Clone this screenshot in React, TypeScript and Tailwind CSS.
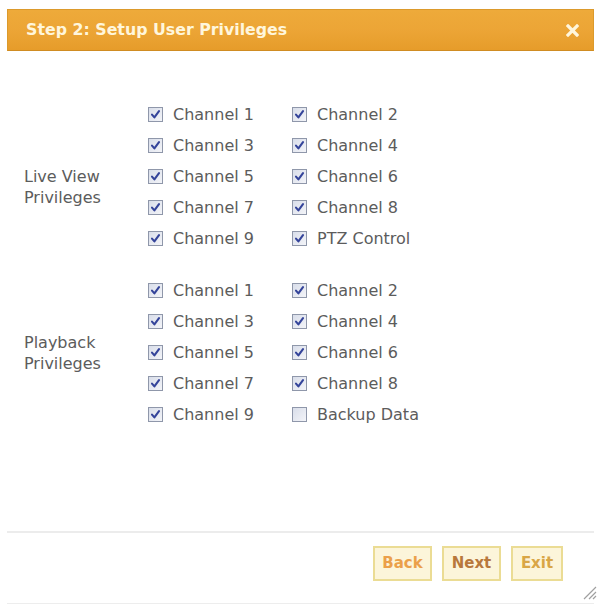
import React from "react";

const Check = ({ checked }: { checked: boolean }) => (
  <span className="relative inline-flex h-[15px] w-[15px] shrink-0 items-center justify-center border border-[#8f97aa] bg-gradient-to-br from-[#d9deea] to-[#f3f4f8]">
    {checked && (
      <svg width="11" height="11" viewBox="0 0 11 11">
        <path d="M2 5.6 L4.4 8.4 L9 2.2" fill="none" stroke="#34449a" strokeWidth="2.1" strokeLinecap="round" strokeLinejoin="round" />
      </svg>
    )}
  </span>
);

const Item = ({ label, checked = true }: { label: string; checked?: boolean }) => (
  <div className="flex h-[31px] items-center gap-[10px]">
    <Check checked={checked} />
    <span className="text-[16px] text-[#5c5c5c]">{label}</span>
  </div>
);

const Group = ({
  title,
  items,
  labelClass,
}: {
  title: [string, string];
  items: [string, boolean][];
  labelClass: string;
}) => (
  <div className="flex">
    <div className={`w-[124px] self-center text-[16px] leading-[21px] text-[#5c5c5c] ${labelClass}`}>
      <div>{title[0]}</div>
      <div>{title[1]}</div>
    </div>
    <div className="grid grid-cols-[144px_144px]">
      {items.map(([l, c], i) => (
        <Item key={i} label={l} checked={c} />
      ))}
    </div>
  </div>
);

export default function App() {
  const live: [string, boolean][] = [
    ["Channel 1", true],
    ["Channel 2", true],
    ["Channel 3", true],
    ["Channel 4", true],
    ["Channel 5", true],
    ["Channel 6", true],
    ["Channel 7", true],
    ["Channel 8", true],
    ["Channel 9", true],
    ["PTZ Control", true],
  ];
  const play: [string, boolean][] = [
    ["Channel 1", true],
    ["Channel 2", true],
    ["Channel 3", true],
    ["Channel 4", true],
    ["Channel 5", true],
    ["Channel 6", true],
    ["Channel 7", true],
    ["Channel 8", true],
    ["Channel 9", true],
    ["Backup Data", false],
  ];
  return (
    <div
      className="relative flex h-[604px] w-[601px] flex-col bg-white"
      style={{ fontFamily: '"DejaVu Sans", Verdana, sans-serif' }}
    >
      <div className="px-[7px] pt-[9px]">
        <div className="flex h-[42px] items-center justify-between border border-[#dc9a2c] border-b-[#d08c22] bg-gradient-to-b from-[#eeaa3a] via-[#eca536] to-[#e69c2a] pl-[18px] pr-[14px]">
          <span className="text-[15.8px] font-bold text-[#fff6dc]">Step 2: Setup User Privileges</span>
          <svg width="13" height="13" viewBox="0 0 13 13">
            <path d="M2 2 L11 11 M11 2 L2 11" stroke="#fff6dc" strokeWidth="3.2" strokeLinecap="square" />
          </svg>
        </div>
      </div>
      <div className="flex flex-1 flex-col gap-[21px] pl-[24px] pt-[48px]">
        <Group title={["Live View", "Privileges"]} items={live} labelClass="mt-[21px]" />
        <Group title={["Playback", "Privileges"]} items={play} labelClass="mt-0" />
      </div>
      <div className="mx-[7px] border-t-2 border-[#ececec]" />
      <div className="flex h-[70px] justify-end gap-[10px] pr-[38px] pt-[13px]">
        <button className="h-[35px] w-[59px] border-2 border-[#ebdc94] bg-[#fcf5da] text-[15px] font-bold text-[#eba04a]">Back</button>
        <button className="h-[35px] w-[59px] border-2 border-[#ebdc94] bg-[#fcf5da] text-[15px] font-bold text-[#b8783c]">Next</button>
        <button className="h-[35px] w-[52px] border-2 border-[#ebdc94] bg-[#fcf5da] text-[15px] font-bold text-[#d9a646]">Exit</button>
      </div>
      <div className="mx-[7px] border-b border-[#ededed]" />
      <svg className="absolute bottom-[4px] right-[4px]" width="16" height="16" viewBox="0 0 16 16">
        <path d="M15 3 L3 15 M15 8 L8 15 M15 12 L12 15" stroke="#a0a0a0" strokeWidth="1.2" />
      </svg>
    </div>
  );
}
